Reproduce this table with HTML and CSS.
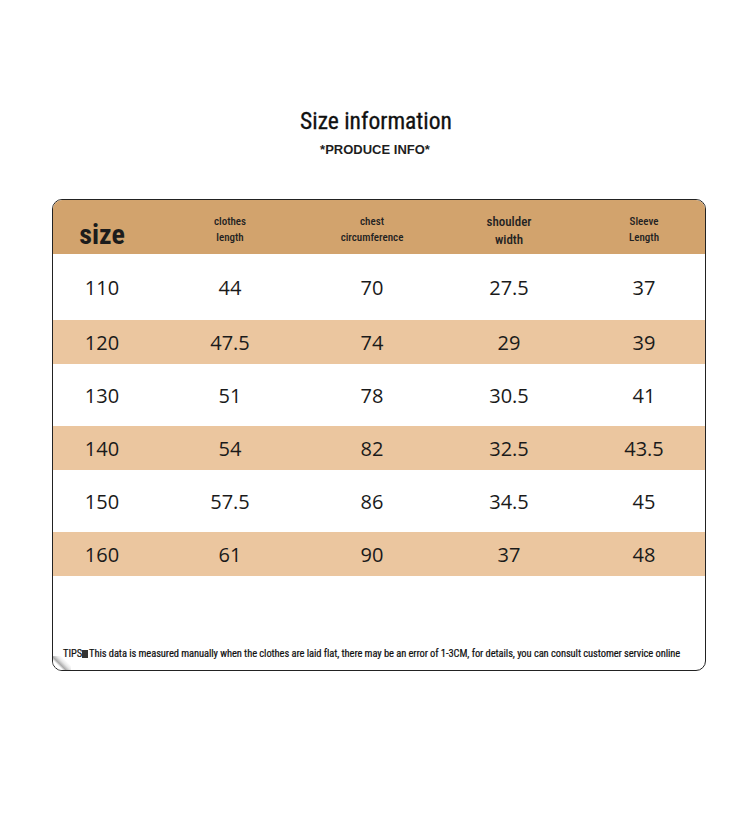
FILE: index.html
```html
<!DOCTYPE html>
<html>
<head>
<meta charset="utf-8">
<link rel="stylesheet" href="styles.css">
</head>
<body>
<div class="page">
  <h1 class="title">Size information</h1>
  <div class="subtitle">*PRODUCE INFO*</div>
  <div class="card">
    <div class="row head">
      <div class="cell size-label">size</div>
      <div class="cell hl">clothes<br>length</div>
      <div class="cell hl">chest<br>circumference</div>
      <div class="cell hl big">shoulder<br>width</div>
      <div class="cell hl">Sleeve<br>Length</div>
    </div>
    <div class="row white r1"><div class="cell">110</div><div class="cell">44</div><div class="cell">70</div><div class="cell">27.5</div><div class="cell">37</div></div>
    <div class="row tan"><div class="cell">120</div><div class="cell">47.5</div><div class="cell">74</div><div class="cell">29</div><div class="cell">39</div></div>
    <div class="row white"><div class="cell">130</div><div class="cell">51</div><div class="cell">78</div><div class="cell">30.5</div><div class="cell">41</div></div>
    <div class="row tan"><div class="cell">140</div><div class="cell">54</div><div class="cell">82</div><div class="cell">32.5</div><div class="cell">43.5</div></div>
    <div class="row white"><div class="cell">150</div><div class="cell">57.5</div><div class="cell">86</div><div class="cell">34.5</div><div class="cell">45</div></div>
    <div class="row tan"><div class="cell">160</div><div class="cell">61</div><div class="cell">90</div><div class="cell">37</div><div class="cell">48</div></div>
    <div class="tips">TIPS<span class="box"></span>This data is measured manually when the clothes are laid flat, there may be an error of 1-3CM, for details, you can consult customer service online</div>
    <div class="curl"></div>
  </div>
</div>
</body>
</html>
```
FILE: styles.css
```css
html, body { margin: 0; padding: 0; background: #fff; }
body { width: 750px; height: 814px; font-family: "Open Sans", sans-serif; color: #1a1a1a; }
.page { padding-top: 104px; display: flex; flex-direction: column; align-items: center; }
.title {
  margin: 0; font-family: "Roboto Condensed", Roboto, sans-serif; font-weight: normal;
  font-size: 23.5px; line-height: 34px; color: #111; margin-left: 2px; -webkit-text-stroke: 0.3px #111;
}
.subtitle {
  margin-top: 4px; font-family: "Liberation Sans", Arial, sans-serif; font-weight: bold;
  font-size: 13px; line-height: 16px; color: #1e1e1e;
}
.card {
  position: relative; margin-top: 41px; margin-left: 8px; width: 652px; height: 470px;
  border: 1px solid #222; border-radius: 10px; overflow: hidden; background: #fff;
  display: flex; flex-direction: column;
}
.row { display: grid; grid-template-columns: 98px 158px 126px 148px 122px; align-items: center; box-sizing: border-box; }
.cell { text-align: center; font-size: 20px; }
.head { background: #d2a36d; height: 54px; padding-top: 6px; }
.size-label {
  font-family: "Roboto Condensed", Roboto, sans-serif;
  font-weight: bold; font-size: 28px; padding-top: 8px; color: #1c1c1c;
}
.hl {
  font-family: "Roboto Condensed", Roboto, sans-serif; font-weight: 500;
  font-size: 11px; line-height: 16px; color: #222;
}
.hl.big { font-size: 13px; line-height: 18px; padding-top: 2px; }
.white { height: 62px; }
.r1 { height: 66px; }
.tan { height: 44px; background: #ebc69f; }
.tips {
  margin-top: auto; margin-bottom: 9px; padding-left: 10px;
  font-family: "Roboto Condensed", Roboto, sans-serif; font-weight: normal;
  font-size: 10.5px; line-height: 14px; color: #111; white-space: nowrap; letter-spacing: -0.08px;
  -webkit-text-stroke: 0.2px #111;
}
.box { display: inline-block; width: 6px; height: 8px; background: #333; margin: 0 1px 0 0; vertical-align: -1px; }
.curl {
  position: absolute; left: 0; bottom: 0; width: 18px; height: 14px;
  background: linear-gradient(45deg, #fff 0%, #fff 30%, #aaa 40%, #e6e6e6 55%, rgba(255,255,255,0) 70%);
}
```
